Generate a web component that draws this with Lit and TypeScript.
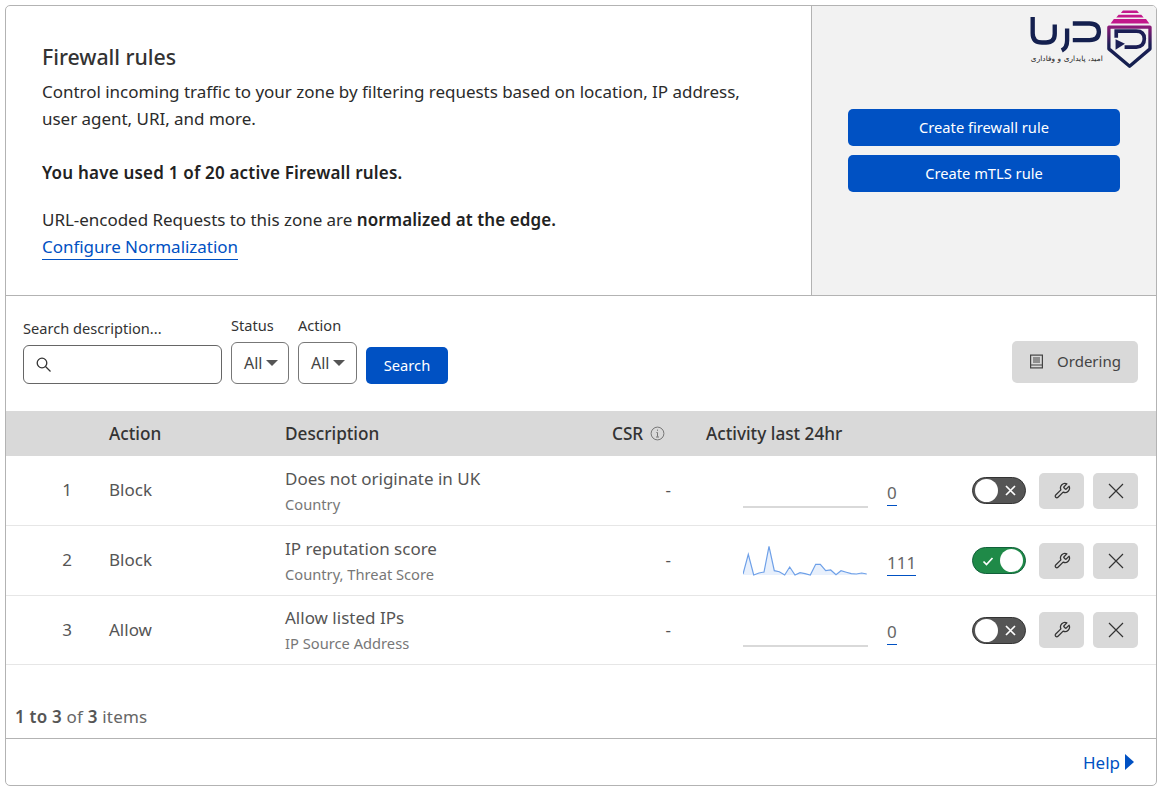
import { css, html, LitElement, svg } from 'lit';
import { customElement } from 'lit/decorators.js';

interface Rule {
  pos: number;
  action: string;
  title: string;
  sub: string;
  count: string;
  on: boolean;
  spark?: number[][];
}

// points read off the reference, x and y in page pixels relative to the chart box
const sparkPoints = [
  [0, 31], [5.3, 11.3], [10.7, 32], [16, 30], [21, 29], [26, 3.3], [31.3, 27.7], [36.3, 28.7],
  [41.7, 32], [46.7, 24], [52, 32], [57, 29.7], [62, 30.7], [67.3, 32], [72.7, 21.3], [77.3, 21.3],
  [82.7, 27.7], [87.7, 27], [93, 31.7], [98, 27.7], [103.3, 29.3], [108.3, 30.7], [113.3, 31], [118.7, 30], [123.7, 31],
];

const rules: Rule[] = [
  { pos: 1, action: 'Block', title: 'Does not originate in UK', sub: 'Country', count: '0', on: false },
  { pos: 2, action: 'Block', title: 'IP reputation score', sub: 'Country, Threat Score', count: '111', on: true, spark: sparkPoints },
  { pos: 3, action: 'Allow', title: 'Allow listed IPs', sub: 'IP Source Address', count: '0', on: false },
];

const wrench = html`<svg width="18" height="18" viewBox="0 0 24 24" fill="none" stroke="#333" stroke-width="1.7" stroke-linejoin="round">
  <path d="M14.7 6.3a1 1 0 0 0 0 1.4l1.6 1.6a1 1 0 0 0 1.4 0l3.77-3.77a6 6 0 0 1-7.94 7.94l-6.91 6.91a2.12 2.12 0 0 1-3-3l6.91-6.91a6 6 0 0 1 7.94-7.94l-3.76 3.76z" />
</svg>`;

const cross = html`<svg width="16" height="16" viewBox="0 0 16 16" fill="none" stroke="#333" stroke-width="1.2">
  <path d="M1 1l14 14M15 1L1 15" />
</svg>`;

const logo = html`<svg class="logo" width="127" height="67" viewBox="50 20 380 200" fill="none">
  <defs>
    <linearGradient id="shield" x1="0" y1="0" x2="0" y2="1">
      <stop offset="0" stop-color="#8a1a78" />
      <stop offset="0.45" stop-color="#1c1f55" />
      <stop offset="1" stop-color="#14204f" />
    </linearGradient>
  </defs>
  <g stroke="#14204f" stroke-width="13">
    <path d="M70 50v48q0 28 28 28h12q26 0 26-26v-28" />
    <path d="M173 84v36q0 22-16 30" />
    <path d="M190 69h50q28 0 28 25t-28 25h-50" />
  </g>
  <text x="172" y="181" fill="#222" font-size="22" font-family="DejaVu Sans, sans-serif" text-anchor="middle" direction="rtl" textLength="215">امید، پایداری و وفاداری</text>
  <g fill="#c2188b">
    <path d="M340 30h42l6 8h-54z" />
    <path d="M327 43h68l7 8h-82z" />
    <path d="M313 56h96l10 13H303z" />
  </g>
  <path d="M298 80H421V145L360 197L298 145Z" stroke="url(#shield)" stroke-width="10" stroke-linejoin="round" />
  <path d="M320 112V92H380Q404 92 404 115Q404 138 380 140H345" stroke="#1c1f55" stroke-width="11" />
  <path d="M318 116l28 14-28 18z" fill="#1c1f55" />
</svg>`;

@customElement('app-root')
export class AppRoot extends LitElement {
  static styles = css`
    :host {
      display: block;
      padding: 5px 4px 5px 5px;
      color: #333;
      font-family: 'Noto Sans', 'Open Sans', sans-serif;
      font-size: 17px;
    }

    .card {
      display: flex;
      flex-direction: column;
      height: 779px;
      border: 1px solid #b3b3b3;
      border-radius: 5px;
      background: #fff;
      overflow: hidden;
    }

    .top {
      display: grid;
      grid-template-columns: 805px 1fr;
      height: 289px;
      flex: none;
      border-bottom: 1px solid #b3b3b3;
    }

    .intro {
      padding: 36px 60px 0 36px;
      line-height: 27px;
      letter-spacing: -0.03px;
      color: #2b2b2b;
    }

    h2 {
      margin: 0 0 6px;
      font-size: 21.3px;
      line-height: 30px;
      font-weight: 500;
      color: #333;
    }

    p {
      margin: 0 0 27px;
    }

    p.used {
      margin-bottom: 20px;
      letter-spacing: 0.2px;
    }

    .intro b {
      font-weight: 600;
      color: #222;
    }

    .edge {
      letter-spacing: 0.1px;
    }

    .link {
      display: inline-block;
      color: #0051c3;
      line-height: 24px;
      border-bottom: 1px solid #0051c3;
    }

    .side {
      position: relative;
      display: flex;
      flex-direction: column;
      justify-content: center;
      gap: 9px;
      padding: 0 36px;
      background: #f2f2f2;
      border-left: 1px solid #b3b3b3;
    }

    .logo {
      position: absolute;
      top: 1px;
      right: 3px;
    }

    .side button {
      width: 272px;
      height: 37px;
    }

    button {
      border: 0;
      border-radius: 5px;
      background: #0051c3;
      color: #fff;
      font: inherit;
      font-size: 14.7px;
      padding: 0 0 2px;
    }

    .filters {
      display: flex;
      align-items: flex-end;
      height: 88px;
      flex: none;
      padding: 0 18px 0 17px;
      gap: 9px;
    }

    .field {
      display: flex;
      flex-direction: column;
      font-size: 14.6px;
      line-height: 20px;
    }

    .field.search,
    .field.pick {
      gap: 7px;
    }

    .input {
      display: flex;
      align-items: center;
      box-sizing: border-box;
      width: 199px;
      height: 39px;
      padding-left: 11px;
      border: 1px solid #666;
      border-radius: 6px;
    }

    .select {
      display: flex;
      align-items: center;
      box-sizing: border-box;
      height: 42px;
      gap: 4px;
      padding-left: 12px;
      border: 1px solid #777;
      border-radius: 6px;
      font-size: 16px;
      color: #444;
    }

    .caret {
      width: 0;
      height: 0;
      border-left: 6px solid transparent;
      border-right: 6px solid transparent;
      border-top: 6px solid #555;
    }

    .go {
      width: 82px;
      height: 37px;
    }

    .ordering {
      display: flex;
      align-items: center;
      justify-content: center;
      gap: 13px;
      width: 126px;
      height: 42px;
      margin-left: auto;
      margin-bottom: 1px;
      background: #d9d9d9;
      color: #444;
      font-size: 15px;
    }

    .row,
    .head {
      display: grid;
      grid-template-columns: 103px 176px 327px 94px 1fr;
      align-items: center;
    }

    .head {
      height: 45px;
      margin-top: 27px;
      flex: none;
      background: #d9d9d9;
      font-weight: 500;
      font-size: 17.2px;
      color: #333;
    }

    .head span {
      display: flex;
      align-items: center;
      gap: 7px;
    }

    .row {
      height: 69px;
      flex: none;
      border-bottom: 1px solid #e6e6e6;
      color: #555;
    }

    .row.short {
      height: 68px;
    }

    .num {
      text-align: right;
      padding-right: 37px;
      margin-bottom: 2px;
    }

    .act {
      margin-bottom: 2px;
    }

    .desc {
      display: flex;
      flex-direction: column;
      gap: 2px;
      line-height: 24px;
    }

    .desc small {
      font-size: 14.7px;
      line-height: 22px;
      color: #777;
    }

    .csr {
      text-align: right;
      padding-right: 35px;
      margin-bottom: 2px;
    }

    .activity {
      display: flex;
      align-items: center;
      padding-left: 37px;
    }

    .chart {
      display: block;
      flex: none;
    }

    .count {
      margin: 4px 0 0 19px;
      width: 85px;
    }

    .count span {
      display: inline-block;
      line-height: 25px;
      border-bottom: 1px solid #0051c3;
      color: #666;
    }

    .toggle {
      display: flex;
      align-items: center;
      box-sizing: border-box;
      width: 54px;
      height: 27px;
      padding: 0 2px;
      flex: none;
      border: 1px solid #333;
      border-radius: 14px;
      background: #555;
    }

    .toggle.on {
      flex-direction: row-reverse;
      background: #1f8a48;
      border-color: #11603a;
    }

    .knob {
      width: 23px;
      height: 23px;
      border-radius: 50%;
      background: #fff;
    }

    .mark {
      flex: 1;
      display: flex;
      justify-content: center;
    }

    .tool {
      display: flex;
      align-items: center;
      justify-content: center;
      width: 45px;
      height: 36px;
      flex: none;
      background: #d9d9d9;
      border-radius: 5px;
    }

    .tool.wrench {
      margin-left: 13px;
    }

    .tool.close {
      margin-left: 9px;
    }

    .summary {
      margin-top: auto;
      padding: 0 9px 9px;
      line-height: 24px;
      letter-spacing: 0.2px;
      color: #666;
    }

    .summary b {
      font-weight: 600;
      color: #555;
    }

    .help {
      display: flex;
      align-items: center;
      justify-content: flex-end;
      gap: 5px;
      height: 46px;
      flex: none;
      padding-right: 22px;
      border-top: 1px solid #b3b3b3;
      color: #0051c3;
    }
  `;

  private renderChart(points?: number[][]) {
    if (!points) {
      return html`<svg class="chart" width="125" height="36" viewBox="0 0 125 36">
        <line x1="0" y1="34" x2="125" y2="34" stroke="#ccc" stroke-width="1.6" />
      </svg>`;
    }
    const line = points.map((p) => p.join(',')).join(' ');
    return html`<svg class="chart" width="125" height="36" viewBox="0 0 125 36">
      ${svg`<polygon points="0,32 ${line} 124,32" fill="#e8f0fc" />
      <polyline points=${line} fill="none" stroke="#6ea0e8" stroke-width="1.2" />`}
    </svg>`;
  }

  private renderRow(rule: Rule) {
    return html`<div class="row ${rule.pos === 3 ? 'short' : ''}">
      <div class="num">${rule.pos}</div>
      <div class="act">${rule.action}</div>
      <div class="desc">${rule.title}<small>${rule.sub}</small></div>
      <div class="csr">-</div>
      <div class="activity">
        ${this.renderChart(rule.spark)}
        <div class="count"><span>${rule.count}</span></div>
        <div class="toggle ${rule.on ? 'on' : ''}">
          <div class="knob"></div>
          <div class="mark">
            ${rule.on
              ? html`<svg width="12" height="12" viewBox="0 0 12 12" fill="none" stroke="#fff" stroke-width="1.7"><path d="M1.5 6.5l3 3 6-6.5" /></svg>`
              : html`<svg width="11" height="11" viewBox="0 0 11 11" fill="none" stroke="#fff" stroke-width="1.7"><path d="M1 1l9 9M10 1l-9 9" /></svg>`}
          </div>
        </div>
        <div class="tool wrench">${wrench}</div>
        <div class="tool close">${cross}</div>
      </div>
    </div>`;
  }

  render() {
    return html`
      <div class="card">
        <section class="top">
          <div class="intro">
            <h2>Firewall rules</h2>
            <p>Control incoming traffic to your zone by filtering requests based on location, IP address, user agent, URI, and more.</p>
            <p class="used"><b>You have used 1 of 20 active Firewall rules.</b></p>
            URL-encoded Requests to this zone are <b class="edge">normalized at the edge.</b><br />
            <span class="link">Configure Normalization</span>
          </div>
          <div class="side">
            ${logo}
            <button>Create firewall rule</button>
            <button>Create mTLS rule</button>
          </div>
        </section>

        <section class="filters">
          <div class="field search">
            <span>Search description...</span>
            <div class="input">
              <svg width="17" height="17" viewBox="0 0 17 17" fill="none" stroke="#333" stroke-width="1.3">
                <circle cx="7" cy="7" r="4.8" />
                <path d="M10.5 10.5l5 5" />
              </svg>
            </div>
          </div>
          <div class="field pick">
            <span>Status</span>
            <div class="select" style="width:58px">All <i class="caret"></i></div>
          </div>
          <div class="field pick">
            <span>Action</span>
            <div class="select" style="width:59px">All <i class="caret"></i></div>
          </div>
          <button class="go">Search</button>
          <button class="ordering">
            <svg width="15" height="15" viewBox="0 0 15 15" fill="none" stroke="#444" stroke-width="1.2">
              <rect x="1.6" y="1.1" width="11.8" height="12.8" />
              <path d="M4 4h7M4 6h7M4 8h7M2 11h11" />
            </svg>
            Ordering
          </button>
        </section>

        <div class="head">
          <span></span>
          <span>Action</span>
          <span>Description</span>
          <span>CSR
            <svg width="15" height="15" viewBox="0 0 15 15" fill="none" stroke="#777">
              <circle cx="7.5" cy="7.5" r="6.4" />
              <path d="M7.5 6.5v4.2M6 11h3M6.4 6.5h1.1M7.5 3.6v1.2" />
            </svg>
          </span>
          <span>Activity last 24hr</span>
        </div>

        ${rules.map((r) => this.renderRow(r))}

        <div class="summary"><b>1 to 3</b> of <b>3</b> items</div>
        <div class="help">Help
          <svg width="9" height="16" viewBox="0 0 9 16"><path d="M0 0l9 8-9 8z" fill="#0051c3" /></svg>
        </div>
      </div>
    `;
  }
}

declare global {
  interface HTMLElementTagNameMap {
    'app-root': AppRoot;
  }
}
